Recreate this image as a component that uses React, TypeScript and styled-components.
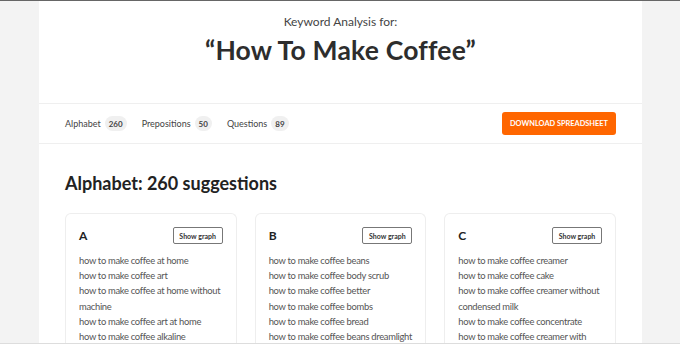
import styled, { createGlobalStyle } from "styled-components";

const GlobalStyle = createGlobalStyle`
  html, body {
    margin: 0;
    padding: 0;
    background: #f3f3f3;
  }
  * { box-sizing: border-box; }
  body {
    font-family: Lato, "Liberation Sans", sans-serif;
    color: #333;
  }
`;

const Frame = styled.div`
  height: 344px;
  overflow: hidden;
  border-top: 1px solid #666;
  border-bottom: 1px solid #ddd;
  display: flex;
  justify-content: center;
  padding-left: 1px;
`;

const Page = styled.main`
  width: 603px;
  background: #fff;
  display: flex;
  flex-direction: column;
`;

const Hero = styled.header`
  height: 103px;
  flex-shrink: 0;
  display: flex;
  flex-direction: column;
  align-items: center;
  padding-top: 13px;
  border-bottom: 1px solid #efefef;
`;

const Kicker = styled.div`
  font-size: 12px;
  line-height: 15px;
  color: #444;
`;

const Title = styled.h1`
  margin: 4px 0 0;
  font-size: 26.5px;
  line-height: 34px;
  font-weight: 700;
  color: #2d2d2d;
  letter-spacing: 0.2px;
`;

const TabBar = styled.nav`
  height: 40px;
  flex-shrink: 0;
  display: flex;
  align-items: center;
  padding: 0 26px;
  border-bottom: 1px solid #efefef;
`;

const Tab = styled.span`
  display: flex;
  align-items: center;
  gap: 4px;
  font-size: 9px;
  color: #444;
  margin-right: 15px;
`;

const Badge = styled.span`
  display: inline-flex;
  align-items: center;
  justify-content: center;
  min-width: 16px;
  height: 15px;
  padding: 0 4px;
  border-radius: 8px;
  background: #f0f0f0;
  font-size: 8px;
  font-weight: 700;
  color: #444;
`;

const Download = styled.button`
  margin-left: auto;
  width: 114px;
  height: 23px;
  padding: 0;
  border: none;
  border-radius: 3px;
  background: #ff6600;
  color: #fff;
  font-family: inherit;
  font-size: 7.4px;
  font-weight: 700;
`;

const Content = styled.section`
  padding: 28px 26px 0;
`;

const SectionTitle = styled.h2`
  margin: 0 0 19px;
  font-size: 18px;
  line-height: 22px;
  font-weight: 700;
  color: #222;
`;

const Grid = styled.div`
  display: grid;
  grid-template-columns: repeat(3, 1fr);
  gap: 18px;
`;

const Card = styled.article`
  border: 1px solid #eeeeee;
  border-bottom: none;
  border-radius: 6px 6px 0 0;
  padding: 13px 13px 0 13px;
  height: 140px;
`;

const CardHead = styled.div`
  display: flex;
  align-items: center;
  justify-content: space-between;
  margin-bottom: 9px;
`;

const Letter = styled.h3`
  margin: 0;
  font-size: 12px;
  font-weight: 700;
  color: #222;
`;

const GraphButton = styled.button`
  width: 50px;
  height: 17px;
  padding: 0;
  border: 1px solid #777;
  border-radius: 2px;
  background: #fff;
  font-family: inherit;
  font-size: 7px;
  font-weight: 700;
  color: #333;
`;

const List = styled.ul`
  margin: 0 -6px 0 0;
  padding: 0;
  list-style: none;
`;

const Item = styled.li`
  font-size: 9.4px;
  letter-spacing: -0.3px;
  line-height: 15.2px;
  color: #555;
`;

const groups = [
  {
    letter: "A",
    items: [
      "how to make coffee at home",
      "how to make coffee art",
      "how to make coffee at home without machine",
      "how to make coffee art at home",
      "how to make coffee alkaline",
    ],
  },
  {
    letter: "B",
    items: [
      "how to make coffee beans",
      "how to make coffee body scrub",
      "how to make coffee better",
      "how to make coffee bombs",
      "how to make coffee bread",
      "how to make coffee beans dreamlight",
    ],
  },
  {
    letter: "C",
    items: [
      "how to make coffee creamer",
      "how to make coffee cake",
      "how to make coffee creamer without condensed milk",
      "how to make coffee concentrate",
      "how to make coffee creamer with",
    ],
  },
];

export default function App() {
  return (
    <>
      <GlobalStyle />
      <Frame>
        <Page>
          <Hero>
            <Kicker>Keyword Analysis for:</Kicker>
            <Title>“How To Make Coffee”</Title>
          </Hero>
          <TabBar>
            <Tab>
              Alphabet <Badge>260</Badge>
            </Tab>
            <Tab>
              Prepositions <Badge>50</Badge>
            </Tab>
            <Tab>
              Questions <Badge>89</Badge>
            </Tab>
            <Download>DOWNLOAD SPREADSHEET</Download>
          </TabBar>
          <Content>
            <SectionTitle>Alphabet: 260 suggestions</SectionTitle>
            <Grid>
              {groups.map((g) => (
                <Card key={g.letter}>
                  <CardHead>
                    <Letter>{g.letter}</Letter>
                    <GraphButton>Show graph</GraphButton>
                  </CardHead>
                  <List>
                    {g.items.map((it) => (
                      <Item key={it}>{it}</Item>
                    ))}
                  </List>
                </Card>
              ))}
            </Grid>
          </Content>
        </Page>
      </Frame>
    </>
  );
}
